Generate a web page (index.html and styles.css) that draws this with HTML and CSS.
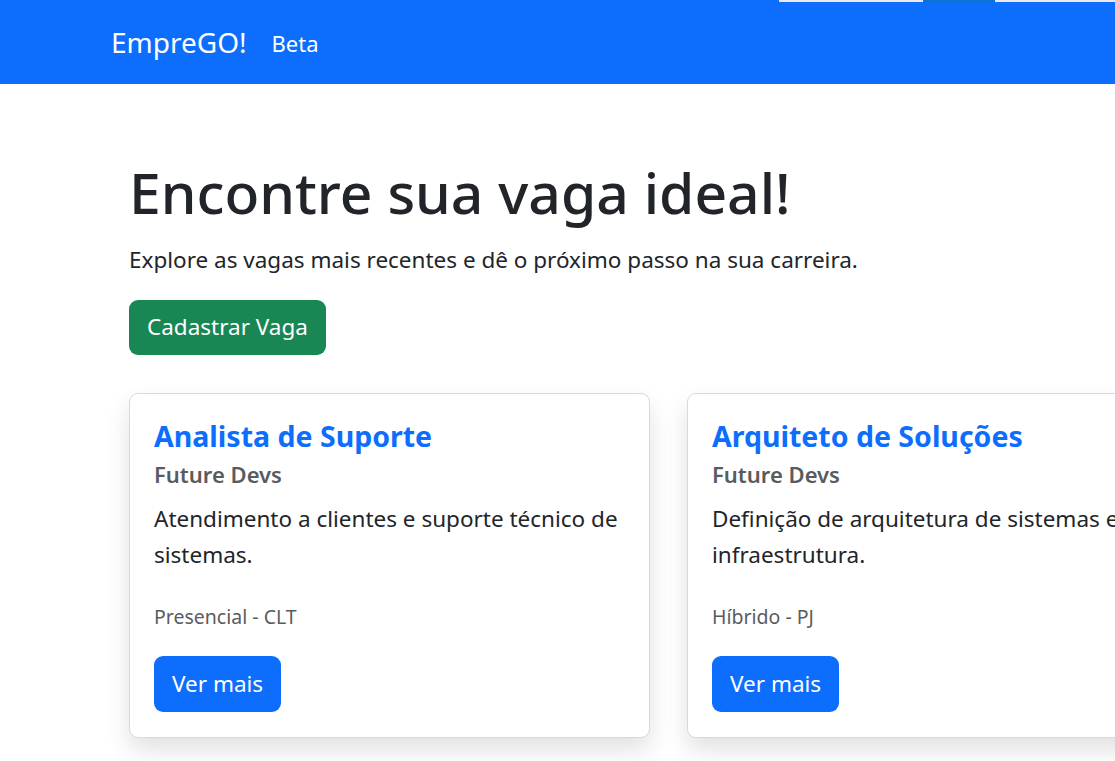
FILE: index.html
```html
<!DOCTYPE html>
<html lang="pt-BR">
<head>
<meta charset="utf-8">
<title>EmpreGO!</title>
<link rel="stylesheet" href="styles.css">
</head>
<body>
<div class="tabstrip"><span class="seg-a"></span><span class="seg-b"></span><span class="seg-c"></span></div>
<nav class="navbar">
  <a class="brand" href="#">EmpreGO!</a>
  <a class="nav-link" href="#">Beta</a>
</nav>
<main class="container">
  <h1 class="title">Encontre sua vaga ideal!</h1>
  <p class="lead">Explore as vagas mais recentes e dê o próximo passo na sua carreira.</p>
  <a class="btn btn-success" href="#">Cadastrar Vaga</a>
  <div class="cards">
    <div class="card">
      <h5 class="card-title">Analista de Suporte</h5>
      <h6 class="card-subtitle">Future Devs</h6>
      <p class="card-text">Atendimento a clientes e suporte técnico de sistemas.</p>
      <p class="card-meta"><small>Presencial - CLT</small></p>
      <a class="btn btn-primary" href="#">Ver mais</a>
    </div>
    <div class="card">
      <h5 class="card-title">Arquiteto de Soluções</h5>
      <h6 class="card-subtitle">Future Devs</h6>
      <p class="card-text">Definição de arquitetura de sistemas e infraestrutura.</p>
      <p class="card-meta"><small>Híbrido - PJ</small></p>
      <a class="btn btn-primary" href="#">Ver mais</a>
    </div>
  </div>
</main>
</body>
</html>
```
FILE: styles.css
```css
* { box-sizing: border-box; }
html, body { margin: 0; padding: 0; }
body {
  font-family: "Noto Sans", "Open Sans", sans-serif;
  font-size: 24px;
  line-height: 36px;
  color: #212529;
  background: #fff;
  width: 1115px;
  height: 761px;
  overflow: hidden;
  position: relative;
}
a { text-decoration: none; }

.tabstrip {
  position: absolute;
  top: 0;
  left: 779px;
  width: 336px;
  height: 2px;
  display: flex;
}
.seg-a { width: 144px; background: #eaeaea; }
.seg-b { width: 72px; background: #0b75ca; }
.seg-c { flex: 1; background: #eaeaea; }

.navbar {
  height: 84px;
  background: #0d6efd;
  display: flex;
  align-items: center;
  padding-left: 111px;
}
.brand {
  color: #fff;
  font-size: 28px;
  line-height: 45px;
  margin-right: 25px;
}
.nav-link {
  color: #fff;
  font-size: 22px;
  line-height: 36px;
  padding-top: 2px;
}

.container {
  padding: 72px 0 0 129px;
}
.title {
  margin: 0 0 14px;
  font-size: 57px;
  line-height: 72px;
  font-weight: 500;
}
.lead {
  margin: 0 0 22px;
  font-size: 22.5px;
}
.btn {
  display: inline-block;
  color: #fff;
  font-size: 22.5px;
  line-height: 36px;
  border-radius: 9px;
}
.btn-success { background: #198754; padding: 9px 18px 10px; }
.btn-primary { background: #0d6efd; padding: 10px 18px; }

.cards {
  margin-top: 38px;
  display: grid;
  grid-template-columns: 521px 521px;
  gap: 37px;
}
.card {
  border: 1px solid #d9d9d9;
  border-radius: 9px;
  padding: 24px;
  background: #fff;
  box-shadow: 0 12px 24px rgba(0, 0, 0, 0.12);
  height: 345px;
}
.card-title {
  margin: 0 0 6px;
  font-size: 28.5px;
  line-height: 36px;
  font-weight: 700;
  color: #0d6efd;
}
.card-subtitle {
  margin: 0 0 12px;
  font-size: 22px;
  line-height: 29px;
  font-weight: 600;
  color: #595c5f;
}
.card-text {
  margin: 0 0 24px;
  font-size: 22.5px;
}
.card-meta {
  margin: 0 0 21px;
  color: #595c5f;
}
.card-meta small {
  font-size: 19.5px;
}
```
